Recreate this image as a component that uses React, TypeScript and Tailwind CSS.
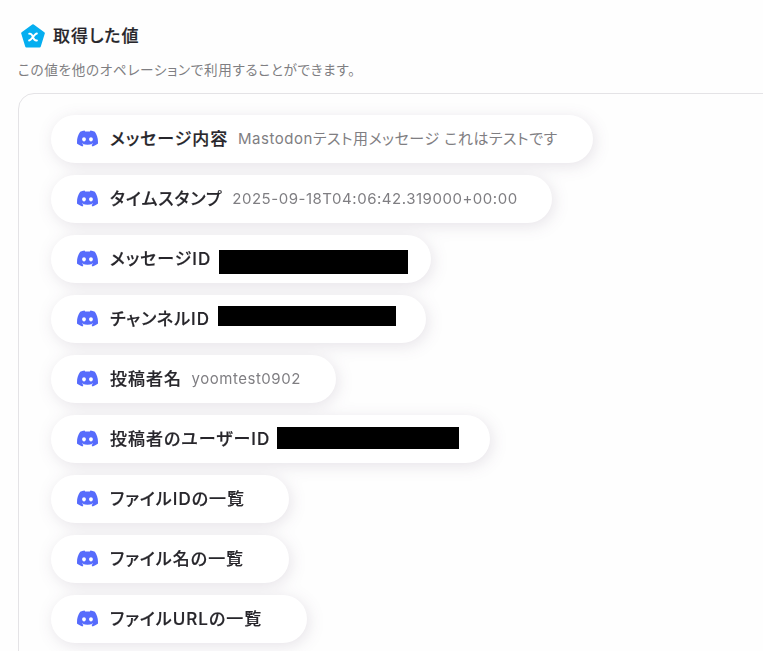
import { SiDiscord } from "react-icons/si";

type Item = { label: string; value?: string; width: string; mask?: string };

const items: Item[] = [
  { label: "メッセージ内容", value: "Mastodonテスト用メッセージ これはテストです", width: "w-[542px]" },
  { label: "タイムスタンプ", value: "2025-09-18T04:06:42.319000+00:00", width: "w-[501px]" },
  { label: "メッセージID", width: "w-[380px]", mask: "left-[168px] top-[15px] w-[189px] h-[24px]" },
  { label: "チャンネルID", width: "w-[375px]", mask: "left-[167px] top-[11px] w-[178px] h-[20px]" },
  { label: "投稿者名", value: "yoomtest0902", width: "w-[285px]" },
  { label: "投稿者のユーザーID", width: "w-[439px]", mask: "left-[226px] top-[12px] w-[182px] h-[22px]" },
  { label: "ファイルIDの一覧", width: "w-[238px]" },
  { label: "ファイル名の一覧", width: "w-[238px]" },
  { label: "ファイルURLの一覧", width: "w-[256px]" },
];

function Pill({ item }: { item: Item }) {
  return (
    <div className={"relative flex h-12 items-center rounded-full bg-white pl-[26px] whitespace-nowrap " + item.width}>
      <SiDiscord className="mb-[2px] size-[21px] shrink-0 text-[#566bfc]" />
      <span className="ml-3 text-[17px] leading-6 font-medium tracking-[0.98px] text-[#27262b] [-webkit-text-stroke:0.2px_#27262b]">
        {item.label}
      </span>
      {item.value && (
        <span className="ml-[9.6px] text-[15px] leading-6 tracking-[0.53px] text-[#7f7e82]">{item.value}</span>
      )}
      {item.mask && <span className={"absolute bg-black " + item.mask} />}
    </div>
  );
}

export default function App() {
  return (
    <main className="h-[651px] w-[763px] overflow-hidden bg-[#fefefe] pt-[21px] pl-[18px] font-['Inter','Noto_Sans_CJK_JP',sans-serif] [font-feature-settings:'palt']">
      <h1 className="flex h-[30px] items-center pl-[3px] text-[17px] font-medium tracking-[0.98px] text-[#27262b] [-webkit-text-stroke:0.2px_#27262b]">
        <svg width="24" height="24" viewBox="0 0 24 24" className="mr-2 shrink-0">
          <path d="M12 1.500 22.600 9.200 18.600 22.200H5.400L1.400 9.200Z" fill="#05aef0" stroke="#05aef0" strokeWidth="2.5" strokeLinejoin="round" />
          <path d="M8.200 9.700c2.300-.5 2.900.9 3.800 3.400s1.500 3.900 3.900 3.400M15.900 9.500c-2.700.3-4.900 6.500-7.800 7" fill="none" stroke="white" strokeWidth="1.9" strokeLinecap="round" />
        </svg>
        <span className="pt-px">取得した値</span>
      </h1>
      <p className="mt-[9px] h-5 text-[13.6px] leading-5 tracking-[0.68px] whitespace-nowrap text-[#7f7e82]">
        この値を他のオペレーションで利用することができます。
      </p>
      <section className="mt-[13px] h-[600px] w-[780px] rounded-[16px] border border-[#e4e3e6] pt-[21px] pl-8">
        <div className="flex flex-col items-start gap-3 drop-shadow-[2px_3px_8px_rgba(60,30,75,0.12)]">
          {items.map((item) => (
            <Pill key={item.label} item={item} />
          ))}
        </div>
      </section>
    </main>
  );
}
